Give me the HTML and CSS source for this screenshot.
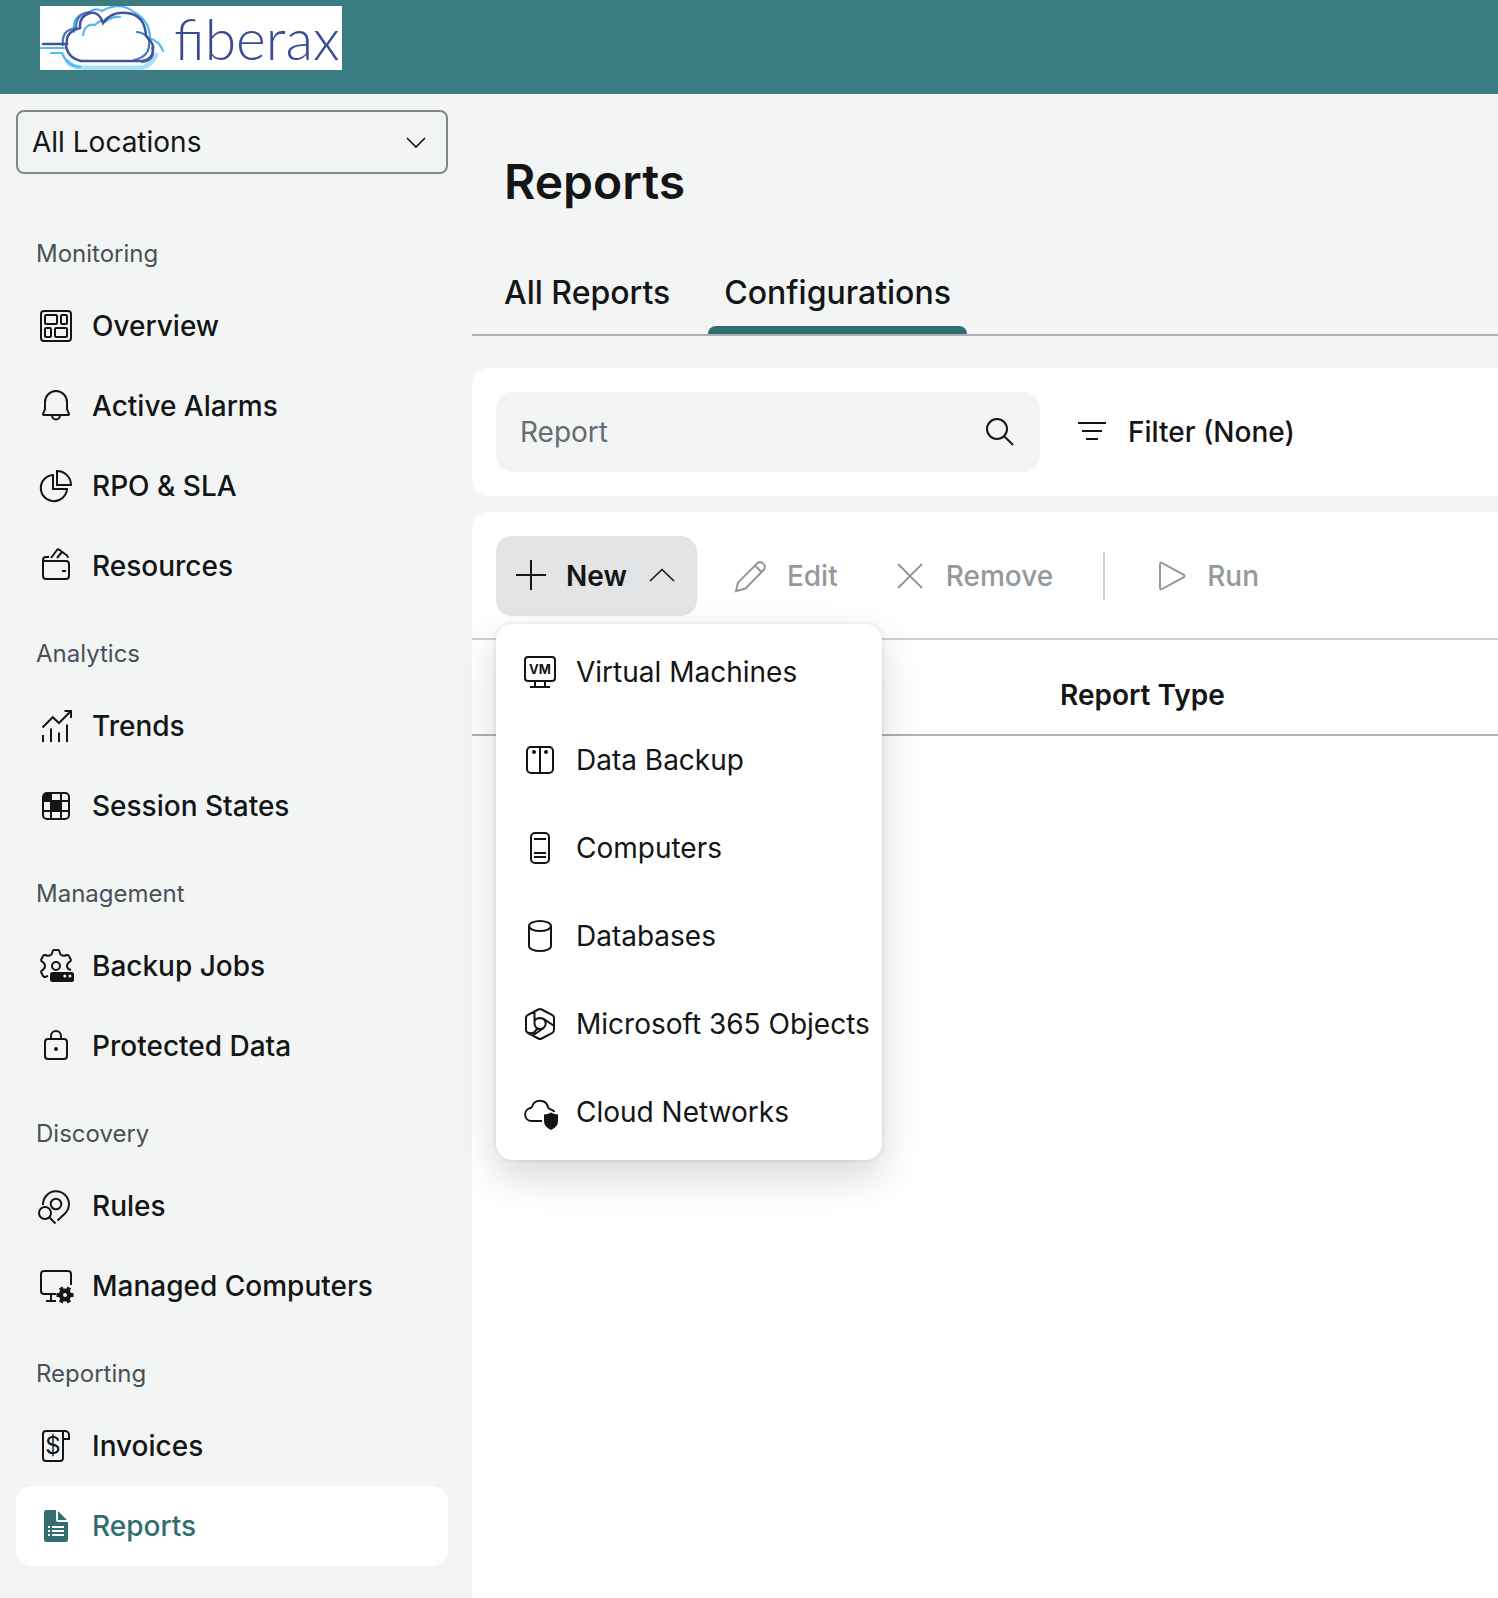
FILE: index.html
```html
<!DOCTYPE html>
<html lang="en">
<head>
<meta charset="utf-8">
<meta name="viewport" content="width=device-width, initial-scale=1">
<title>Reports</title>
<link rel="stylesheet" href="styles.css">
</head>
<body>
<header class="topbar">
  <a class="logo" href="#" aria-label="fiberax">
    <svg class="logo-mark" viewBox="0 0 128 64" aria-hidden="true">
      <g fill="none" stroke-linecap="round">
        <path stroke="#a5e3fb" stroke-width="5" d="M28 56q6 6 16 6h56q10-1 16-13"/>
        <path stroke="#55b9ee" stroke-width="2.200" d="M1 42h23M11 47h11q5 13 18 14M34 26q-2-18 14-19 7-6 14-2 18-10 32 1 16 9 16 26 10 4 13 13M43 29q2-12 12-10 6-6 10-3 7-6 15-5"/>
        <path stroke="#3f78b4" stroke-width="2.200" d="M23 39q-2-15 13-17 0-15 14-16M97 26q14 2 12 14-1 11-15 14M112 42q4 12-10 14"/>
        <path stroke="#45519b" stroke-width="2.400" d="M3 38h24q-2-12 13-16-1-12 10-15 9-2 13 10 8-12 24-10 18 2 19 23 9 8 7 15-1 9-11 10H41q-13-3-15-15"/>
      </g>
    </svg>
    <span class="logo-name">fiberax</span>
  </a>
</header>
<div class="layout">
  <aside class="sidebar">
    <div class="location">
      <select class="location-select" aria-label="Location"><option>All Locations</option></select>
      <svg class="location-arrow" viewBox="0 0 32 32" aria-hidden="true"><path class="ln ln-thin" d="M7 12l9 9 9-9"/></svg>
    </div>
    <nav class="nav">
      <h2 class="nav-title">Monitoring</h2>
      <a class="nav-item" href="#"><svg class="icon" viewBox="0 0 32 32"><g class="ln"><rect x="1" y="1" width="30" height="30" rx="3"/><rect x="5" y="5" width="12" height="9" rx="1"/><rect x="21" y="5" width="6" height="9" rx="1"/><rect x="5" y="18" width="6" height="9" rx="1"/><rect x="15" y="18" width="12" height="9" rx="1"/></g></svg>Overview</a>
      <a class="nav-item" href="#"><svg class="icon" viewBox="0 0 32 32"><path class="ln" d="M5 19v-7a11 11 0 0 1 22 0v7l2 5.200a.6.6 0 0 1-.6.8H3.600a.6.6 0 0 1-.6-.8zM12 25v.5a4 4 0 0 0 8 0V25"/></svg>Active Alarms</a>
      <a class="nav-item" href="#"><svg class="icon" viewBox="0 0 32 32"><path class="ln" d="M17 1v14h14A14 14 0 0 0 17 1zM13 5a13.100 13.100 0 1 0 14 14H13z"/></svg>RPO &amp; SLA</a>
      <a class="nav-item" href="#"><svg class="icon" viewBox="0 0 32 32"><path class="ln" d="M9 7H6a3 3 0 0 0-3 3v16a3 3 0 0 0 3 3h20a3 3 0 0 0 3-3V14a3 3 0 0 0-3-3H4M22 21h4M11 8l6-8q1-1.200 2.300-.3L27 5.500q1.300 1 .7 2.500M17 8l5-6"/></svg>Resources</a>
      <h2 class="nav-title">Analytics</h2>
      <a class="nav-item" href="#"><svg class="icon" viewBox="0 0 32 32"><path class="ln" d="M2.500 17.500L12.700 7.200 19 13 31 1M24.500 1H31v7M3 32v-7M11 32V18.500M19 32v-9.500M27 32V14.500"/></svg>Trends</a>
      <a class="nav-item" href="#"><svg class="icon" viewBox="0 0 32 32"><path class="fl" d="M11 11V3H6a3 3 0 0 0-3 3v5zM11 11h10v10H11z"/><g class="ln"><rect x="3" y="3" width="26" height="26" rx="4"/><path d="M11 3v26M21 3v26M3 11h26M3 21h26"/></g></svg>Session States</a>
      <h2 class="nav-title">Management</h2>
      <a class="nav-item" href="#"><svg class="icon" viewBox="0 0 32 32"><path class="ln" d="M8 26l-3 1q-1 .3-1.600-.6L1.200 22.500q-.4-1.200.6-1.900Q5 18.500 5 16t-3.200-4.600q-1-.7-.6-1.900l2.200-3.900Q4 4.700 5 5q3.500 1.500 5.800.2 1.200-.7 1.800-3.800Q12.800 0 14 0h4q1.200 0 1.400 1.400.6 3.100 1.800 3.800Q23.500 6.500 27 5q1-.3 1.600.6l2.200 3.900q.4 1.200-.6 1.900Q27 13.500 27 16q0 3 4 4"/><circle class="ln" cx="16" cy="16" r="4"/><rect class="fl" x="10" y="22" width="24" height="10" rx="2.500"/><circle cx="24.800" cy="26" r="1.500" fill="#f3f5f4"/><circle cx="30" cy="26" r="1.500" fill="#f3f5f4"/></svg>Backup Jobs</a>
      <a class="nav-item" href="#"><svg class="icon" viewBox="0 0 32 32"><rect class="ln" x="5" y="9" width="22" height="20" rx="3"/><path class="ln" d="M11 9V6a5 5 0 0 1 10 0v3"/><circle class="fl" cx="16" cy="19" r="2"/></svg>Protected Data</a>
      <h2 class="nav-title">Discovery</h2>
      <a class="nav-item" href="#"><svg class="icon" viewBox="0 0 32 32"><path class="ln" d="M3 15A13 13.200 0 0 1 29 14q0 5-4 9.500l-7.500 7M9.300 27.300l6.200 6.200"/><circle class="ln" cx="16" cy="14" r="5.300"/><circle class="ln" cx="5" cy="23" r="6"/></svg>Rules</a>
      <a class="nav-item" href="#"><svg class="icon" viewBox="0 0 32 32"><path class="ln" d="M31 15V4a3 3 0 0 0-3-3H4a3 3 0 0 0-3 3v17a3 3 0 0 0 3 3h12M11 24v7M6 31h10"/><circle cx="25" cy="25" r="4.200" fill="none" stroke="#131516" stroke-width="4.400"/><path fill="none" stroke="#131516" stroke-width="4" d="M19.500 25h-3M30.500 25h3M22.200 20.200l-1.500-2.600M27.800 20.200l1.500-2.600M22.200 29.800l-1.500 2.600M27.800 29.800l1.500 2.600"/></svg>Managed Computers</a>
      <h2 class="nav-title">Reporting</h2>
      <a class="nav-item" href="#"><svg class="icon" viewBox="0 0 32 32"><path class="ln" d="M25 1H6a3 3 0 0 0-3 3v24a3 3 0 0 0 3 3h14a3 3 0 0 0 3-3V1h2a4 4 0 0 1 4 4v4h-6"/><text class="icon-dollar" x="13" y="24">$</text></svg>Invoices</a>
      <a class="nav-item nav-item-active" href="#" aria-current="page"><svg class="icon" viewBox="0 0 32 32"><path class="fl" d="M6.500 0H16v10a2 2 0 0 0 2 2h10v17.500a2.500 2.500 0 0 1-2.500 2.500h-19A2.500 2.500 0 0 1 4 29.500v-27A2.500 2.500 0 0 1 6.500 0zM18 1l9 9h-9z"/><path d="M12 17h12M12 21h12M12 25h12M8 17h2M8 21h2M8 25h2" stroke="#fff" stroke-width="2"/></svg>Reports</a>
    </nav>
  </aside>
  <main class="main">
    <h1 class="title">Reports</h1>
    <div class="tabs" role="tablist">
      <button class="tab" role="tab" aria-selected="false">All Reports</button>
      <button class="tab tab-active" role="tab" aria-selected="true">Configurations</button>
    </div>
    <section class="card filters">
      <div class="search">
        <input class="search-input" type="text" placeholder="Report" aria-label="Report">
        <svg class="icon" viewBox="0 0 32 32" aria-hidden="true"><circle class="ln" cx="13" cy="13" r="10"/><path class="ln" d="M20 20l9 9"/></svg>
      </div>
      <button class="filter"><svg class="icon" viewBox="0 0 32 32"><path class="ln" d="M2 7h28M6 15h20M10 23h12"/></svg>Filter (None)</button>
    </section>
    <section class="card results">
      <div class="toolbar">
        <div class="menu-anchor">
          <button class="tool tool-open" aria-haspopup="menu" aria-expanded="true"><svg class="icon" viewBox="0 0 32 32"><path class="ln" d="M2 15h30M17 0v30"/></svg>New<svg class="icon" viewBox="0 0 32 32"><path class="ln ln-thin" d="M3 21L15 9.500 27 21"/></svg></button>
          <div class="menu" role="menu">
            <button class="menu-item" role="menuitem"><svg class="icon" viewBox="0 0 32 32"><rect class="ln" x="1" y="1" width="30" height="24" rx="3"/><path class="ln" d="M11 25v6M21 25v6M6 31h20"/><text class="icon-vm" x="16" y="18">VM</text></svg>Virtual Machines</button>
            <button class="menu-item" role="menuitem"><svg class="icon" viewBox="0 0 32 32"><rect class="ln" x="3" y="3" width="26" height="26" rx="4"/><path class="ln" d="M16 3v26"/><circle class="fl" cx="10" cy="8" r="2"/><circle class="fl" cx="22" cy="8" r="2"/></svg>Data Backup</button>
            <button class="menu-item" role="menuitem"><svg class="icon" viewBox="0 0 32 32"><rect class="ln" x="7" y="1" width="18" height="30" rx="4"/><path class="ln" d="M10 7h12M10 21h12M10 25h12"/></svg>Computers</button>
            <button class="menu-item" role="menuitem"><svg class="icon" viewBox="0 0 32 32"><ellipse class="ln" cx="16" cy="6" rx="11" ry="5"/><path class="ln" d="M5 6v20c0 2.800 5 5 11 5s11-2.200 11-5V6"/></svg>Databases</button>
            <button class="menu-item" role="menuitem"><svg class="icon" viewBox="0 0 32 32"><path class="ln" d="M14.300 1.500q1.700-.9 3.400 0l10.700 5.700q1.600.9 1.600 2.700v12.200q0 1.800-1.600 2.700l-10.700 5.700q-1.700.9-3.400 0L3.600 24.800Q2 23.900 2 22.100V9.900q0-1.800 1.600-2.700zM10.500 4v11.500a5.600 5.600 0 1 0 5.500-5.600q-4 0-5.500 3M16 9.900q2 0 4 1.300l9.500 6.300M21 18q-1 2-3.500 3.500l-8 5.500M3 24q3 2 7 .5l3.500-4"/></svg>Microsoft 365 Objects</button>
            <button class="menu-item" role="menuitem"><svg class="icon" viewBox="0 0 32 32"><path class="ln" d="M18 25H7.500a6.500 6.500 0 0 1-1-12.900q1.300-.2 1.500-1.400a8.300 8.300 0 0 1 16 .3q.3 2 2.300 2.300 3 .6 4.200 2.700"/><path class="fl" d="M27 16.500q3 2 7 2V25q0 6-7 9-7-3-7-9v-6.500q4 0 7-2z"/></svg>Cloud Networks</button>
          </div>
        </div>
        <button class="tool" disabled><svg class="icon" viewBox="0 0 32 32"><path class="ln" d="M1 31l2-8.500L22.500 3a4.700 4.700 0 0 1 6.500 6.500L10.500 28.500zM20 5.500l6.500 6.500"/></svg>Edit</button>
        <button class="tool" disabled><svg class="icon" viewBox="0 0 32 32"><path class="ln" d="M4 4l24 24M28 4L4 28"/></svg>Remove</button>
        <span class="divider"></span>
        <button class="tool" disabled><svg class="icon" viewBox="0 0 32 32"><path class="ln" d="M5 4.500q0-2.500 2.300-1.400L28.500 14.500q2 1.500 0 3L7.300 28.900Q5 30 5 27.500z"/></svg>Run</button>
      </div>
      <table class="grid">
        <thead><tr><td class="grid-name"></td><th scope="col">Report Type</th></tr></thead>
      </table>
    </section>
  </main>
</div>
</body>
</html>
```
FILE: styles.css
```css
* { box-sizing: border-box; }

body {
  margin: 0;
  min-height: 100vh;
  display: flex;
  flex-direction: column;
  overflow-x: hidden;
  background: #f3f5f4;
  color: #131516;
  font: 400 28px/32px Inter, "Liberation Sans", sans-serif;
}

button, input, select { font: inherit; color: inherit; }
button { border: 0; background: none; padding: 0; text-align: left; white-space: nowrap; }
h1, h2 { margin: 0; }

.icon { flex: none; width: 32px; height: 32px; overflow: visible; }
.ln { fill: none; stroke: currentColor; stroke-width: 2; }
.ln-thin { stroke-width: 1.6; }
.fl { fill: currentColor; }
.icon-dollar { font-size: 24px; font-weight: 400; text-anchor: middle; fill: currentColor; }
.icon-vm { font-size: 13px; font-weight: 700; text-anchor: middle; fill: currentColor; }

.topbar { height: 94px; padding: 6px 40px; background: #3a7c81; }
.logo {
  display: flex;
  align-items: center;
  width: 302px;
  height: 64px;
  background: #fff;
  color: #3b4a95;
  text-decoration: none;
}
.logo-mark { flex: none; width: 128px; height: 64px; }
.logo-name { padding-left: 6px; font: 300 57px/64px Lato, sans-serif; }

.layout { flex: 1; display: flex; }

.sidebar { flex: none; width: 472px; padding: 16px 24px 32px 16px; }
.location { position: relative; margin-bottom: 32px; }
.location-select {
  display: block;
  width: 100%;
  height: 64px;
  padding: 0 14px;
  border: 2px solid #7f878c;
  border-radius: 8px;
  background: transparent;
  appearance: none;
}
.location-arrow { position: absolute; right: 16px; top: 16px; width: 32px; height: 32px; pointer-events: none; }

.nav-title {
  padding: 34px 20px 18px;
  color: #495057;
  font-size: 24px;
  font-weight: 400;
  line-height: 28px;
}
.nav-item {
  display: flex;
  align-items: center;
  gap: 20px;
  height: 80px;
  padding: 0 24px;
  border-radius: 16px;
  color: inherit;
  font-weight: 500;
  text-decoration: none;
}
.nav-item-active { background: #fff; color: #316e6f; }

.main { flex: 1; min-width: 0; display: flex; flex-direction: column; }
.title { padding: 56px 32px 0; font-size: 48px; font-weight: 600; line-height: 64px; }
.tabs { display: flex; gap: 22px; margin: 32px 0; padding: 0 16px; border-bottom: 2px solid #adb1b5; }
.tab { height: 88px; padding: 14px 16px 0; border-bottom: 8px solid transparent; font-size: 32px; font-weight: 500; line-height: 40px; }
.tab-active { position: relative; }
.tab-active::after {
  content: "";
  position: absolute;
  left: 0;
  right: 0;
  bottom: -8px;
  height: 8px;
  border-radius: 8px 8px 0 0;
  background: #316e6f;
}

.card { background: #fff; border-radius: 16px 0 0 0; }
.filters { display: flex; align-items: center; gap: 36px; margin-bottom: 16px; padding: 24px; border-radius: 16px 0 0 16px; }
.search { display: flex; align-items: center; width: 544px; height: 80px; padding: 0 24px; border-radius: 16px; background: #f3f5f4; }
.search-input { flex: 1; min-width: 0; padding: 0; border: 0; outline: 0; background: transparent; }
.search-input::placeholder { color: #646b71; opacity: 1; }
.filter { display: flex; align-items: center; gap: 20px; height: 80px; font-weight: 500; }

.results { flex: 1; }
.toolbar { display: flex; align-items: center; gap: 20px; padding: 24px 24px 22px; border-bottom: 2px solid #cdd2d3; }
.menu-anchor { position: relative; }
.tool { display: flex; align-items: center; gap: 20px; height: 80px; padding: 0 18px; border-radius: 16px; font-weight: 500; }
.tool:disabled { color: #92999d; }
.tool-open { background: #e2e4e6; font-weight: 600; }
.divider { width: 2px; height: 48px; margin: 0 12px; background: #cdd2d3; }

.menu {
  position: absolute;
  top: 88px;
  left: 0;
  z-index: 1;
  padding: 4px 0;
  border-radius: 16px;
  background: #fff;
  box-shadow: 0 16px 40px rgba(0, 0, 0, .16), 0 0 4px rgba(0, 0, 0, .12);
}
.menu-item { display: flex; align-items: center; gap: 20px; width: 100%; height: 88px; padding: 0 12px 0 28px; }

.grid { width: 100%; table-layout: fixed; border-collapse: separate; border-spacing: 0; }
.grid td, .grid th { height: 96px; padding: 16px 24px 0; border-bottom: 2px solid #adb3b7; font-weight: 600; text-align: left; }
.grid .grid-name { width: 564px; }
```
